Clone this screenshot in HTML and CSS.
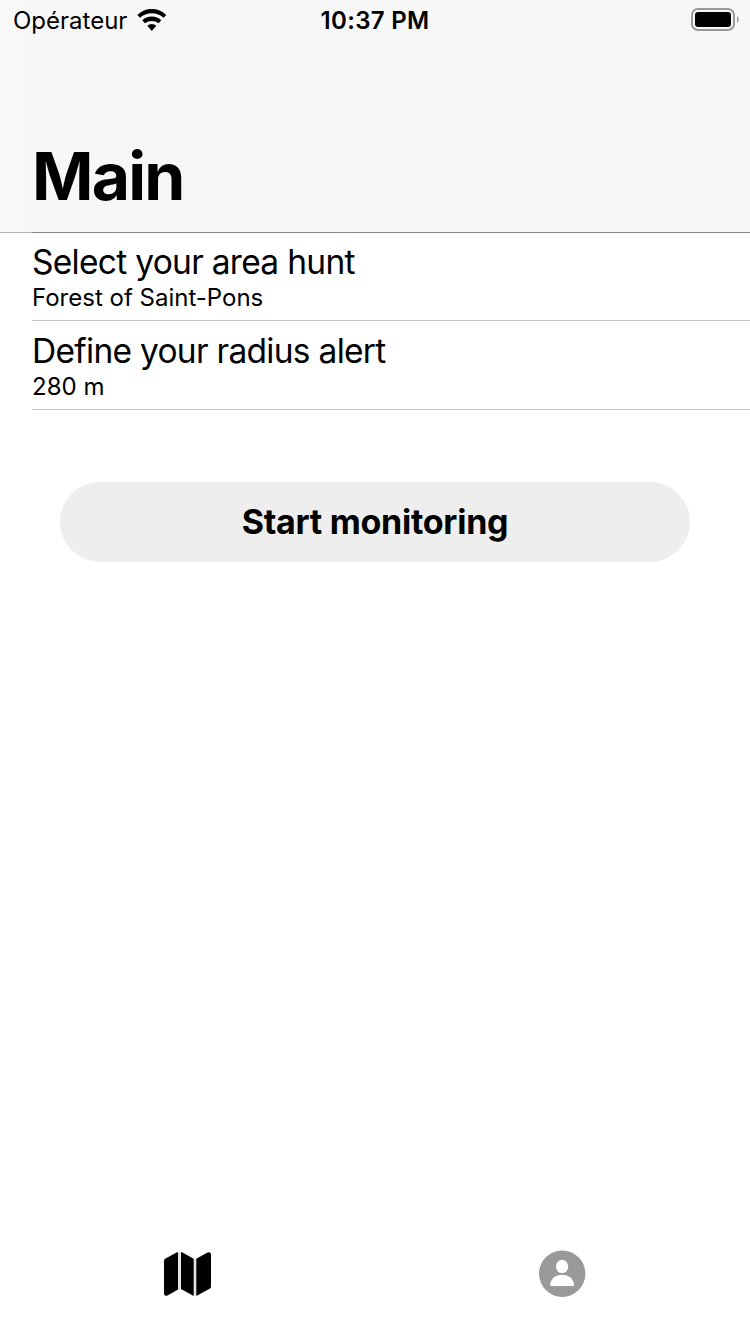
FILE: index.html
```html
<!DOCTYPE html>
<html lang="en">
<head>
<meta charset="utf-8">
<title>Main</title>
<link rel="stylesheet" href="styles.css">
</head>
<body>
<div class="screen">
  <header class="header">
    <div class="status">
      <div class="carrier"><span class="carrier-name">Opérateur</span>
        <svg class="wifi" width="30" height="22" viewBox="0 0 30 22"><path d="M.3 6A20.3 20.3 0 0 1 29.3 6L26.6 8.8A17.7 17.7 0 0 0 3 8.8z"/><path d="M5.3 11.3a14 14 0 0 1 19 0l-2.7 2.9a11.2 11.2 0 0 0-13.6 0z"/><path d="M10.3 16.8a6.8 6.8 0 0 1 9 0L14.8 22z"/></svg>
      </div>
      <time class="clock">10:37 PM</time>
      <svg class="battery" width="48" height="24" viewBox="0 0 48 24"><rect class="battery-case" x="1" y="1" width="42" height="21" rx="6"/><rect x="4" y="4" width="36" height="15" rx="3"/><path class="battery-tip" d="M46 8c2.2 1 2.2 6 0 7z"/></svg>
    </div>
    <h1 class="title">Main</h1>
  </header>
  <main class="content">
    <section class="row"><h2 class="row-title">Select your area hunt</h2><p class="row-detail">Forest of Saint-Pons</p></section>
    <section class="row"><h2 class="row-title">Define your radius alert</h2><p class="row-detail">280 m</p></section>
    <button class="start">Start monitoring</button>
  </main>
  <nav class="tabs">
    <a class="tab"><svg class="map" width="47" height="44" viewBox="0 0 47 44"><path class="fold" d="M14 0h3v38h-3zM29.5 7h3v36h-3z"/><path d="M0 9Q0 7.3 1.5 6.5L13 .3Q14 0 14 1v36.5L3.5 43.4Q0 44.5 0 41.5zM17 .8Q17-.3 18 .3L29.7 6.8V44L17 37zM32.3 6.8L43 .7Q47-.8 47 3v31.5q0 1.3-1 2L32.3 44z"/></svg></a>
    <a class="tab"><svg width="47" height="47" viewBox="0 0 47 47"><circle class="user-bg" cx="23.2" cy="23.7" r="23.2"/><ellipse class="user-fg" cx="23.1" cy="16.4" rx="6.1" ry="6.7"/><path class="user-fg" d="M12.3 36q-1.3 0-1.2-1.5C12 28.5 16.5 24.8 23.1 24.8s11.1 3.7 12 9.7q.1 1.5-1.2 1.5z"/></svg></a>
  </nav>
</div>
</body>
</html>
```
FILE: styles.css
```css
* { box-sizing: border-box; }
body { margin: 0; font-family: Inter, sans-serif; color: #000; }
.screen { width: 750px; height: 1334px; background: #fff; display: flex; flex-direction: column; }
.header {
  height: 233px;
  background:
    linear-gradient(90deg, #b2b2b2 32px, #858585 32px) bottom / 100% 1px no-repeat,
    linear-gradient(90deg, #f9f9f9, #f7f7f7 40px);
}
.status { height: 40px; display: grid; grid-template-columns: 1fr auto 1fr; align-items: center; padding: 0 11px 0 13px; }
.carrier { display: flex; align-items: center; gap: 9.5px; font-size: 24px; }
.clock { font-size: 24px; font-weight: 600; letter-spacing: .3px; margin-left: -2px; }
.battery { justify-self: end; }
.battery-case { fill: none; stroke: #999; stroke-width: 2; }
.battery-tip { fill: #999; }
.title { margin: 95px 0 0 32px; font-size: 66px; line-height: 82px; font-weight: 700; letter-spacing: -1.8px; }
.content { flex: 1; }
.row { height: 88px; margin-left: 32px; padding-top: 8px; border-bottom: 1px solid #c6c6c8; }
.row + .row { height: 89px; padding-top: 9px; }
.row-title { margin: 0; font-size: 33.5px; line-height: 42px; font-weight: 400; letter-spacing: -.71px; }
.row-detail { margin: 0; font-size: 24px; line-height: 29px; }
.start { display: block; width: 630px; height: 80px; margin: 72px 0 0 60px; padding: 0; border: 0; border-radius: 40px; background: #eee; color: #000; font: 700 34px/80px Inter, sans-serif; letter-spacing: -.27px; }
.tabs { height: 98px; display: grid; grid-template-columns: 1fr 1fr; padding-top: 14px; }
.tab { display: flex; justify-content: center; align-items: flex-start; }
.map { margin-top: 2px; }
.fold { fill: #e4e4e4; }
.user-bg { fill: #999; }
.user-fg { fill: #fff; }
```
